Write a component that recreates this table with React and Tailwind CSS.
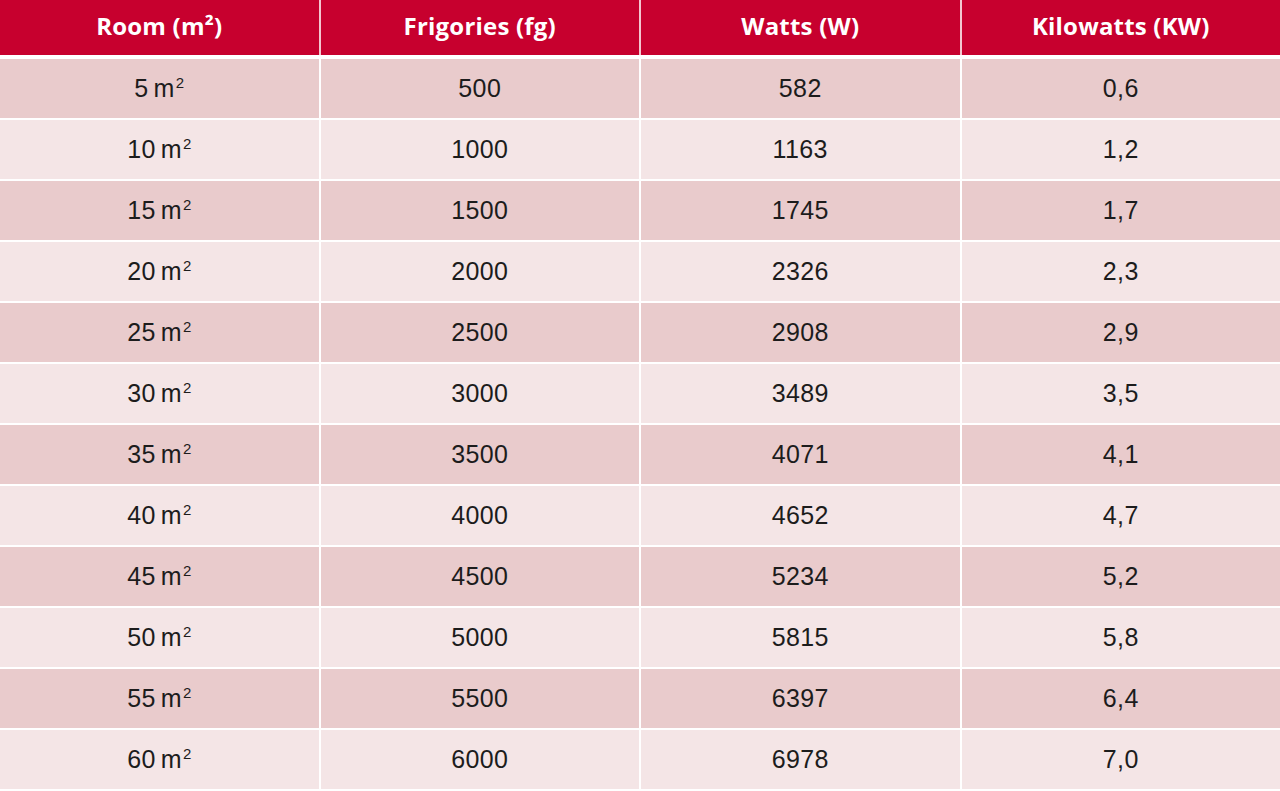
import React from "react";

const rows = [
  ["5", "500", "582", "0,6"],
  ["10", "1000", "1163", "1,2"],
  ["15", "1500", "1745", "1,7"],
  ["20", "2000", "2326", "2,3"],
  ["25", "2500", "2908", "2,9"],
  ["30", "3000", "3489", "3,5"],
  ["35", "3500", "4071", "4,1"],
  ["40", "4000", "4652", "4,7"],
  ["45", "4500", "5234", "5,2"],
  ["50", "5000", "5815", "5,8"],
  ["55", "5500", "6397", "6,4"],
  ["60", "6000", "6978", "7,0"],
];

const heads = ["Room (m²)", "Frigories (fg)", "Watts (W)", "Kilowatts (KW)"];

export default function App() {
  return (
    <div className="w-[1280px] h-[791px] bg-white overflow-hidden flex flex-col">
      <div className="grid grid-cols-4 gap-x-[2px] h-[55px] bg-[#f3c6cf]">
        {heads.map((h) => (
          <div
            key={h}
            className="bg-[#c7002e] flex items-center justify-center text-white font-bold text-[24px] tracking-[0.2px] pb-[3px]"
            style={{ fontFamily: '"Open Sans", sans-serif' }}
          >
            {h}
          </div>
        ))}
      </div>
      <div className="h-[2px] bg-white" />
      <div className="flex flex-col gap-[2px] pt-[2px]">
        {rows.map((r, i) => (
          <div key={i} className="grid grid-cols-4 gap-x-[2px] h-[59px]">
            {r.map((c, j) => (
              <div
                key={j}
                className={`${i % 2 === 0 ? "bg-[#e9cbcc]" : "bg-[#f4e5e6]"} flex items-center justify-center text-[#1c1c1c] text-[25px] tracking-[0.4px]`}
                style={{ fontFamily: '"Liberation Sans", Arial, sans-serif' }}
              >
                {j === 0 ? (
                  <span>
                    {c}
                    <span className="ml-[5px]">m</span>
                    <sup className="text-[15px] align-baseline relative top-[-9px] leading-none tracking-normal ml-[1px]">2</sup>
                  </span>
                ) : (
                  c
                )}
              </div>
            ))}
          </div>
        ))}
      </div>
    </div>
  );
}
